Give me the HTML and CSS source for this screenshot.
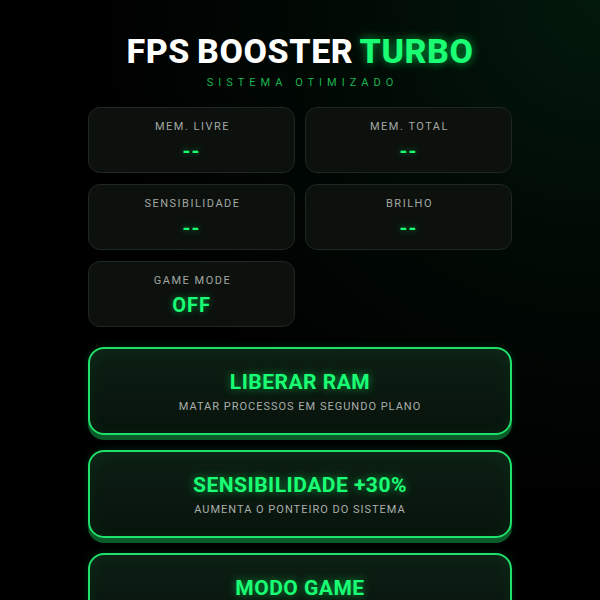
FILE: index.html
```html
<!DOCTYPE html>
<html lang="pt">
<head>
<meta charset="utf-8">
<title>FPS Booster Turbo</title>
<link rel="stylesheet" href="styles.css">
</head>
<body>
<main class="app">
  <header class="header">
    <h1 class="title">FPS BOOSTER <span class="accent">TURBO</span></h1>
    <p class="subtitle">SISTEMA OTIMIZADO</p>
  </header>
  <section class="stats">
    <div class="stat"><span class="stat-label">MEM. LIVRE</span><span class="stat-value">--</span></div>
    <div class="stat"><span class="stat-label">MEM. TOTAL</span><span class="stat-value">--</span></div>
    <div class="stat"><span class="stat-label">SENSIBILIDADE</span><span class="stat-value">--</span></div>
    <div class="stat"><span class="stat-label">BRILHO</span><span class="stat-value">--</span></div>
    <div class="stat"><span class="stat-label">GAME MODE</span><span class="stat-value">OFF</span></div>
  </section>
  <section class="actions">
    <button class="action"><span class="action-title">LIBERAR RAM</span><span class="action-sub">MATAR PROCESSOS EM SEGUNDO PLANO</span></button>
    <button class="action"><span class="action-title">SENSIBILIDADE +30%</span><span class="action-sub">AUMENTA O PONTEIRO DO SISTEMA</span></button>
    <button class="action"><span class="action-title">MODO GAME</span><span class="action-sub">PRIORIDADE MÁXIMA AO JOGO</span></button>
  </section>
</main>
</body>
</html>
```
FILE: styles.css
```css
html, body {
  margin: 0;
  padding: 0;
  height: 100%;
}
body {
  background: radial-gradient(circle at 100% 0%, #03190c 0%, #010a05 30%, #000 60%) #000;
  font-family: Roboto, "Liberation Sans", sans-serif;
  color: #fff;
  overflow: hidden;
}
.app {
  width: 424px;
  margin: 0 auto;
  padding-top: 31px;
}
.header {
  text-align: center;
}
.title {
  margin: 0;
  font-size: 34px;
  font-weight: 800;
  line-height: 40px;
  letter-spacing: 0.6px;
  word-spacing: -2px;
  color: #fff;
}
.accent {
  color: #1aff74;
  text-shadow: 0 0 10px rgba(0, 255, 100, 0.6);
}
.subtitle {
  margin: 5px 0 0;
  font-size: 11px;
  line-height: 14px;
  letter-spacing: 5px;
  color: #19b552;
  padding-left: 5px;
}
.stats {
  margin-top: 17px;
  display: grid;
  grid-template-columns: 1fr 1fr;
  column-gap: 10px;
  row-gap: 11px;
}
.stat {
  height: 66px;
  box-sizing: border-box;
  border-radius: 12px;
  border: 1px solid #1f2722;
  background: #0c110e;
  display: flex;
  flex-direction: column;
  align-items: center;
  padding-top: 12px;
}
.stat-label {
  font-size: 11px;
  line-height: 14px;
  letter-spacing: 1.5px;
  color: #a3a7a4;
  padding-left: 2px;
}
.stat-value {
  margin-top: 5px;
  font-size: 20px;
  line-height: 24px;
  font-weight: 700;
  letter-spacing: 1px;
  color: #1aff74;
  text-shadow: 0 0 6px rgba(0, 255, 100, 0.5);
}
.actions {
  margin-top: 20px;
  display: flex;
  flex-direction: column;
  gap: 15px;
}
.action {
  height: 88px;
  box-sizing: border-box;
  border: 2px solid #1fe06a;
  border-radius: 16px;
  background: linear-gradient(180deg, #0d1f14 0%, #08130c 100%);
  box-shadow: 0 5px 0 #0b5a2a, inset 0 0 18px rgba(0, 255, 100, 0.06), 0 0 8px rgba(0, 255, 100, 0.15);
  display: flex;
  flex-direction: column;
  align-items: center;
  padding: 20px 0 0;
  font-family: inherit;
  cursor: pointer;
}
.action-title {
  font-size: 21px;
  line-height: 26px;
  font-weight: 700;
  letter-spacing: 0.5px;
  color: #1aff74;
  text-shadow: 0 0 8px rgba(0, 255, 100, 0.55);
}
.action-sub {
  margin-top: 5px;
  font-size: 11px;
  line-height: 14px;
  letter-spacing: 1px;
  color: #a9aeab;
}
```
